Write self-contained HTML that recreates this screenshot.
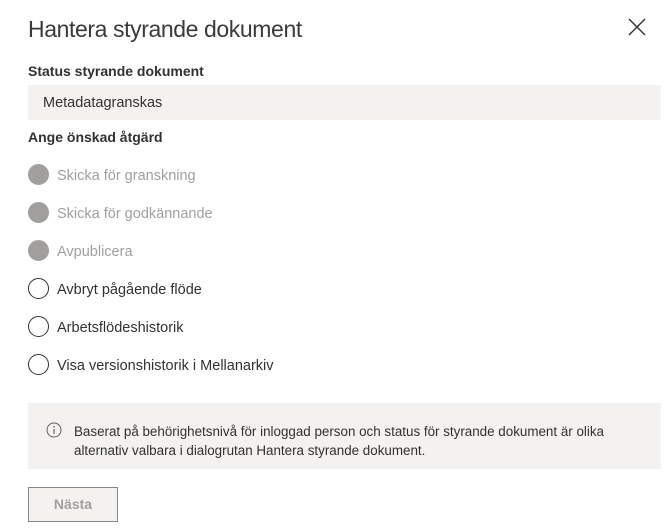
<!DOCTYPE html>
<html><head><meta charset="utf-8"><style>
body{margin:0;width:671px;height:532px;background:#fff;font-family:"Liberation Sans",sans-serif;color:#323130;position:relative;overflow:hidden}
.a{position:absolute;white-space:nowrap}
.title{left:28px;top:16px;font-size:23px;font-weight:300;color:#3b3a39;letter-spacing:-0.4px}
.lbl{left:28px;font-size:14px;font-weight:bold}
.box{left:28px;top:85px;width:633px;height:35px;background:#f3f2f1}
.r{left:28px;width:22px;height:22px}
.r span{position:absolute;left:29px;top:4px;font-size:14.5px}
.c{position:absolute;left:0;top:0;width:19px;height:19px;border-radius:50%;border:1.5px solid #323130;background:#fff}
.d .c{background:#a19f9d;border-color:#a19f9d}
.d span{color:#a19f9d}
</style></head><body>
<div class="a title">Hantera styrande dokument</div>
<svg class="a" style="left:628px;top:18px" width="18" height="18" viewBox="0 0 18 18"><path d="M1 1L17 17M17 1L1 17" stroke="#323130" stroke-width="1.4"/></svg>
<div class="a lbl" style="top:63px">Status styrande dokument</div>
<div class="a box"><div class="a" style="left:15px;top:10px;font-size:14.5px">Metadatagranskas</div></div>
<div class="a lbl" style="top:129px">Ange önskad åtgärd</div>
<div class="a r d" style="top:164px"><div class="c"></div><span>Skicka för granskning</span></div>
<div class="a r d" style="top:202px"><div class="c"></div><span>Skicka för godkännande</span></div>
<div class="a r d" style="top:240px"><div class="c"></div><span>Avpublicera</span></div>
<div class="a r" style="top:278px"><div class="c"></div><span>Avbryt pågående flöde</span></div>
<div class="a r" style="top:316px"><div class="c"></div><span>Arbetsflödeshistorik</span></div>
<div class="a r" style="top:354px"><div class="c"></div><span>Visa versionshistorik i Mellanarkiv</span></div>
<div class="a" style="left:28px;top:403px;width:633px;height:66px;background:#f3f2f1">
<svg class="a" style="left:18px;top:19px" width="16" height="16" viewBox="0 0 16 16"><circle cx="8" cy="8" r="7" fill="none" stroke="#605e5c" stroke-width="1"/><path d="M8 7v5" stroke="#605e5c" stroke-width="1.1"/><circle cx="8" cy="4.8" r="0.8" fill="#605e5c"/></svg>
<div class="a" style="left:46px;top:19px;font-size:13.4px;line-height:19px">Baserat på behörighetsnivå för inloggad person och status för styrande dokument är olika<br>alternativ valbara i dialogrutan Hantera styrande dokument.</div>
</div>
<div class="a" style="left:28px;top:487px;width:90px;height:35px;border:1px solid #8a8886;box-sizing:border-box;background:#f3f2f1;color:#a19f9d;font-weight:bold;font-size:14px;text-align:center;line-height:33px">Nästa</div>
</body></html>
